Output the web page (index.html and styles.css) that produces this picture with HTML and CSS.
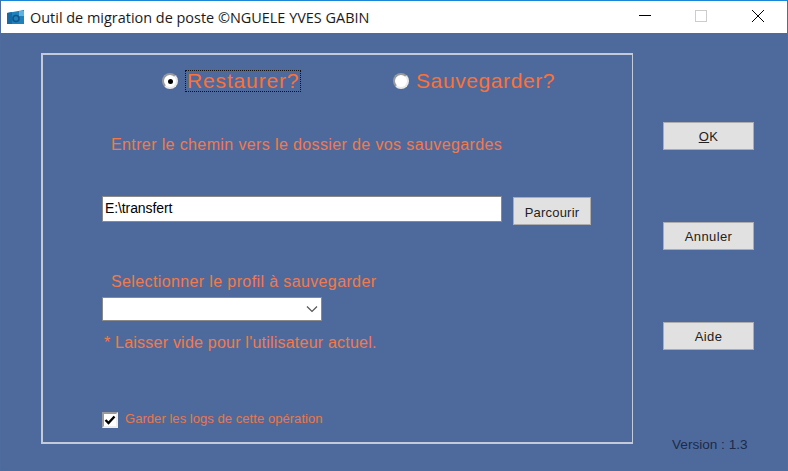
FILE: index.html
```html
<!DOCTYPE html>
<html lang="fr">
<head>
<meta charset="utf-8">
<title>Outil de migration de poste</title>
<link rel="stylesheet" href="styles.css">
</head>
<body>
<div class="window">
  <header class="titlebar">
    <svg class="app-icon" width="19" height="16" viewBox="0 0 19 16"><path d="M1 4 L18 1 V15 L1 15 Z" fill="#1f80ba"/><path d="M1 4 L6 3 V15 L1 15 Z" fill="#126aa6"/><circle cx="10" cy="9.5" r="3" fill="none" stroke="#0f4a80" stroke-width="1.6" opacity=".8"/><path d="M13 2 H18 V7 H13 Z" fill="#5fb2de"/></svg>
    <span class="title">Outil de migration de poste ©NGUELE YVES GABIN</span>
    <div class="controls">
      <svg class="ctl" width="12" height="13" viewBox="0 0 12 13"><path d="M0 5.5 H12" stroke="#000" fill="none"/></svg>
      <svg class="ctl" width="12" height="13" viewBox="0 0 12 13"><rect x="0.5" y="0.5" width="11" height="11" stroke="#ccc" fill="none"/></svg>
      <svg class="ctl" width="12" height="13" viewBox="0 0 12 13"><path d="M0 0 L12 12 M12 0 L0 12" stroke="#000" fill="none"/></svg>
    </div>
  </header>
  <main class="client">
    <section class="panel">
      <div class="modes">
        <label class="mode mode-a"><span class="radio checked"></span><span class="mode-text focused">Restaurer?</span></label>
        <label class="mode mode-b"><span class="radio"></span><span class="mode-text">Sauvegarder?</span></label>
      </div>
      <p class="label path-label">Entrer le chemin vers le dossier de vos sauvegardes</p>
      <div class="path-row">
        <div class="input">E:\transfert</div>
        <button class="btn browse" type="button">Parcourir</button>
      </div>
      <p class="label profile-label">Selectionner le profil à sauvegarder</p>
      <div class="select">
        <svg width="12" height="8" viewBox="0 0 12 8"><path d="M1 1.5 L6 6.5 L11 1.5" stroke="#555" stroke-width="1.2" fill="none"/></svg>
      </div>
      <p class="note">* Laisser vide pour l'utilisateur actuel.</p>
      <label class="logs">
        <span class="check"><svg width="12" height="10" viewBox="0 0 12 10"><path d="M1.5 5 L4.5 8 L10.5 1.5" stroke="#000" stroke-width="2.4" fill="none"/></svg></span>
        <span class="logs-text">Garder les logs de cette opération</span>
      </label>
    </section>
    <aside class="side">
      <button class="btn side-btn" type="button"><u>O</u>K</button>
      <button class="btn side-btn" type="button">Annuler</button>
      <button class="btn side-btn" type="button">Aide</button>
      <div class="version">Version : 1.3</div>
    </aside>
  </main>
</div>
</body>
</html>
```
FILE: styles.css
```css
* { box-sizing: border-box; }
html, body { margin: 0; padding: 0; }
body { width: 788px; height: 471px; overflow: hidden; font-family: "Liberation Sans", Arial, sans-serif; }
.window { width: 788px; height: 471px; display: flex; flex-direction: column; border: 1px solid #4f6c9e; border-top: 1px solid #1a86d8; background: #4e6a9c; }
.titlebar { height: 32px; flex: none; background: #fff; display: flex; align-items: center; padding-left: 5px; }
.app-icon { flex: none; }
.title { margin-left: 5px; font: 14.45px "Open Sans", sans-serif; color: #1a1a1a; }
.controls { margin-left: auto; display: flex; gap: 44px; padding: 0 23px 2px 0; }
.ctl { display: block; }
.ctl:last-child { margin-left: 1px; }
.client { flex: 1; display: flex; padding: 20px 0 0 40px; }
.panel { width: 592px; height: 391px; border: 2px solid #c3cad9; border-right-width: 1px; display: flex; flex-direction: column; padding-left: 59px; }
.modes { display: flex; height: 30px; margin: 11px 0 0 60px; align-items: center; }
.mode { display: flex; align-items: center; }
.mode-a { width: 231px; }
.radio { width: 16px; height: 16px; border-radius: 50%; background: #fff; border: 2px solid; border-color: #9a9a9a #e8e8e8 #e8e8e8 #9a9a9a; display: flex; align-items: center; justify-content: center; flex: none; }
.radio.checked::after { content: ""; width: 5px; height: 5px; border-radius: 50%; background: #000; }
.mode-text { color: #ff7033; font-size: 21px; letter-spacing: .6px; margin-left: 5px; padding: 0 1px; border: 1px dotted transparent; line-height: 20px; }
.mode-text.focused { border-color: #111; letter-spacing: .85px; margin-left: 7px; }
.label { margin: 0; color: #f4794a; font-size: 16px; line-height: 18px; letter-spacing: .38px; }
.path-label { margin: 40px 0 0 9px; }
.path-row { display: flex; align-items: flex-start; margin-top: 42px; }
.input { width: 400px; height: 26px; background: #fff; border: 1px solid #8a8a8a; font-size: 14px; letter-spacing: -.1px; line-height: 22px; padding-left: 2px; color: #000; }
.btn { background: #e1e1e1; border: 1px solid #adadad; color: #222; font-family: "Liberation Sans", Arial, sans-serif; font-size: 13px; padding: 0; }
.browse { width: 78px; height: 28px; margin: 1px 0 0 11px; padding-top: 2px; letter-spacing: .2px; }
.profile-label { margin: 48px 0 0 9px; }
.select { width: 220px; height: 24px; margin-top: 6px; background: #fff; border: 1px solid #8a8a8a; display: flex; align-items: center; justify-content: flex-end; padding-right: 3px; }
.note { margin: 13px 0 0 2px; color: #f4794a; font-size: 16px; line-height: 18px; letter-spacing: .22px; }
.logs { display: flex; align-items: center; margin-top: 59px; }
.check { width: 16px; height: 16px; background: #fff; border: 2px solid; border-color: #9a9a9a #eee #eee #9a9a9a; display: flex; align-items: center; justify-content: center; }
.logs-text { margin-left: 7px; padding-bottom: 2px; color: #e9774d; font-size: 13px; letter-spacing: .05px; }
.side { flex: 1; display: flex; flex-direction: column; padding: 69px 0 0 30px; }
.side-btn { width: 91px; height: 28px; margin-bottom: 72px; letter-spacing: .4px; }
.version { margin: 15px 0 0 9px; color: #1b2a4d; font-size: 13.6px; line-height: 16px; }
```
